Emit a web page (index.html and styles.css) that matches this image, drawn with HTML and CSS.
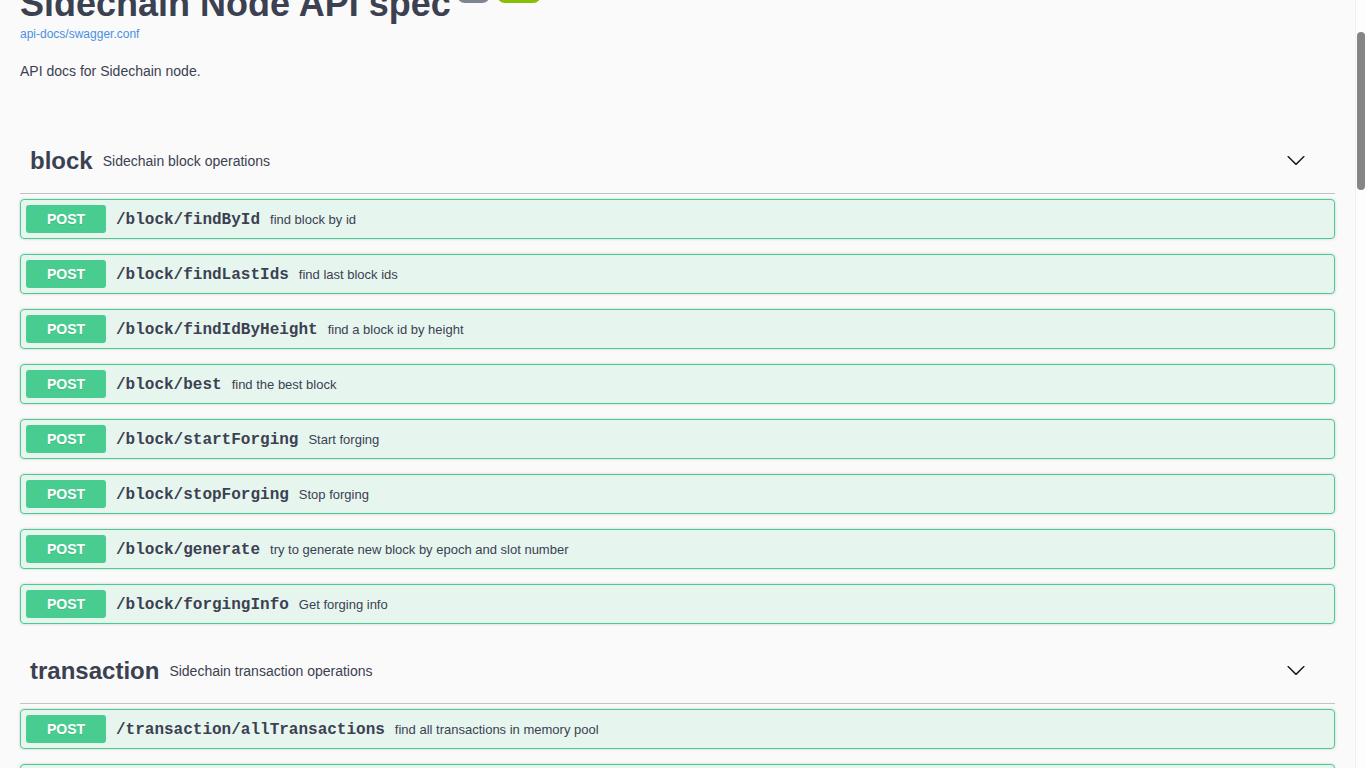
FILE: index.html
```html
<!DOCTYPE html>
<html lang="en">
<head>
<meta charset="utf-8">
<title>Sidechain Node API spec</title>
<link rel="stylesheet" href="styles.css">
</head>
<body>
<div class="viewport">
  <main class="page">
    <div class="wrapper">
      <section class="info">
        <div class="title-row">
          <h2 class="title">Sidechain Node API spec</h2>
          <span class="pill pill-version">1.0.0</span>
          <span class="pill pill-oas">OAS 3.0</span>
        </div>
        <a class="url" href="#">api-docs/swagger.conf</a>
        <p class="description">API docs for Sidechain node.</p>
      </section>

      <section class="tag-section">
        <h3 class="tag">
          <span class="tag-name">block</span>
          <small class="tag-desc">Sidechain block operations</small>
          <svg class="chevron" width="20" height="20" viewBox="0 0 20 20"><path d="M17.418 6.109c.272-.268.709-.268.979 0s.271.701 0 .969l-7.908 7.83c-.27.268-.707.268-.979 0l-7.908-7.830c-.27-.268-.27-.701 0-.969.271-.268.709-.268.979 0L10 13.25l7.418-7.141z"/></svg>
        </h3>
        <div class="opblock"><span class="method">POST</span><span class="path">/block/findById</span><span class="summary">find block by id</span></div>
        <div class="opblock"><span class="method">POST</span><span class="path">/block/findLastIds</span><span class="summary">find last block ids</span></div>
        <div class="opblock"><span class="method">POST</span><span class="path">/block/findIdByHeight</span><span class="summary">find a block id by height</span></div>
        <div class="opblock"><span class="method">POST</span><span class="path">/block/best</span><span class="summary">find the best block</span></div>
        <div class="opblock"><span class="method">POST</span><span class="path">/block/startForging</span><span class="summary">Start forging</span></div>
        <div class="opblock"><span class="method">POST</span><span class="path">/block/stopForging</span><span class="summary">Stop forging</span></div>
        <div class="opblock"><span class="method">POST</span><span class="path">/block/generate</span><span class="summary">try to generate new block by epoch and slot number</span></div>
        <div class="opblock"><span class="method">POST</span><span class="path">/block/forgingInfo</span><span class="summary">Get forging info</span></div>
      </section>

      <section class="tag-section">
        <h3 class="tag">
          <span class="tag-name">transaction</span>
          <small class="tag-desc">Sidechain transaction operations</small>
          <svg class="chevron" width="20" height="20" viewBox="0 0 20 20"><path d="M17.418 6.109c.272-.268.709-.268.979 0s.271.701 0 .969l-7.908 7.83c-.27.268-.707.268-.979 0l-7.908-7.830c-.27-.268-.27-.701 0-.969.271-.268.709-.268.979 0L10 13.25l7.418-7.141z"/></svg>
        </h3>
        <div class="opblock"><span class="method">POST</span><span class="path">/transaction/allTransactions</span><span class="summary">find all transactions in memory pool</span></div>
        <div class="opblock"><span class="method">POST</span><span class="path">/transaction/findById</span><span class="summary">find transaction by id</span></div>
        <div class="opblock"><span class="method">POST</span><span class="path">/transaction/decodeTransactionBytes</span><span class="summary">decode transaction bytes</span></div>
      </section>
    </div>
  </main>
  <div class="scrollbar"><div class="thumb"></div></div>
</div>
</body>
</html>
```

FILE: styles.css
```css
html, body {
  margin: 0;
  padding: 0;
  height: 100%;
  overflow: hidden;
  background: #fafafa;
  font-family: "Liberation Sans", Arial, sans-serif;
  color: #3b4151;
}

.viewport {
  display: flex;
  height: 768px;
}

.page {
  flex: 1;
  overflow: hidden;
  height: 768px;
}

.wrapper {
  padding: 0 20px;
  margin-top: -14px;
}

.scrollbar {
  width: 11px;
  background: #fdfdfd;
  border-left: 1px solid #f0f0f0;
  box-sizing: border-box;
}

.thumb {
  width: 8px;
  margin: 32px 0 0 1px;
  height: 158px;
  border-radius: 4px;
  background: #858585;
}

/* info */
.info {
  display: flex;
  flex-direction: column;
}

.title-row {
  display: flex;
  align-items: flex-start;
}

.title {
  margin: 0;
  font-size: 36px;
  line-height: 36px;
  font-weight: 700;
  color: #3b4151;
}

.pill {
  font-size: 10px;
  line-height: 12px;
  color: #fff;
  padding: 2px 0;
  border-radius: 57px;
  text-align: center;
  margin-top: 1px;
}

.pill-version {
  background: #7d8492;
  width: 33px;
  margin-left: 6px;
}

.pill-oas {
  background: #89bf04;
  width: 44px;
  margin-left: 7px;
}

.url {
  margin-top: 5px;
  font-size: 12px;
  line-height: 14px;
  color: #4990e2;
  text-decoration: none;
  align-self: flex-start;
}

.description {
  margin: 20px 0 0;
  font-size: 14px;
  line-height: 20px;
  color: #3b4151;
}

/* tag sections */
.tag-section {
  display: flex;
  flex-direction: column;
}

.info + .tag-section {
  margin-top: 48px;
}

.tag {
  display: flex;
  align-items: center;
  margin: 0 0 5px;
  padding: 10px 20px 10px 10px;
  min-height: 44px;
  border-bottom: 1px solid rgba(59, 65, 81, .3);
  font-size: 24px;
  font-weight: 700;
  color: #3b4151;
}

.tag-name {
  line-height: 30px;
}

.tag-desc {
  flex: 1;
  padding: 0 10px;
  font-size: 14px;
  font-weight: 400;
  line-height: 20px;
}

.chevron {
  margin: 0 9px 3px 0;
  fill: #1a1a1a;
  flex-shrink: 0;
}

.opblock {
  display: flex;
  align-items: center;
  margin: 0 0 15px;
  padding: 5px;
  border: 1px solid #49cc90;
  border-radius: 4px;
  background: rgba(73, 204, 144, .1);
  box-shadow: 0 0 3px rgba(0, 0, 0, .19);
}

.method {
  min-width: 80px;
  height: 28px;
  line-height: 28px;
  border-radius: 3px;
  background: #49cc90;
  color: #fff;
  font-size: 14px;
  font-weight: 700;
  text-align: center;
  text-shadow: 0 1px 0 rgba(0, 0, 0, .1);
}

.path {
  padding: 2px 10px 0;
  font-family: "Liberation Mono", "DejaVu Sans Mono", monospace;
  font-size: 16px;
  font-weight: 700;
  color: #3b4151;
}

.summary {
  font-size: 13px;
  color: #3b4151;
}
```
